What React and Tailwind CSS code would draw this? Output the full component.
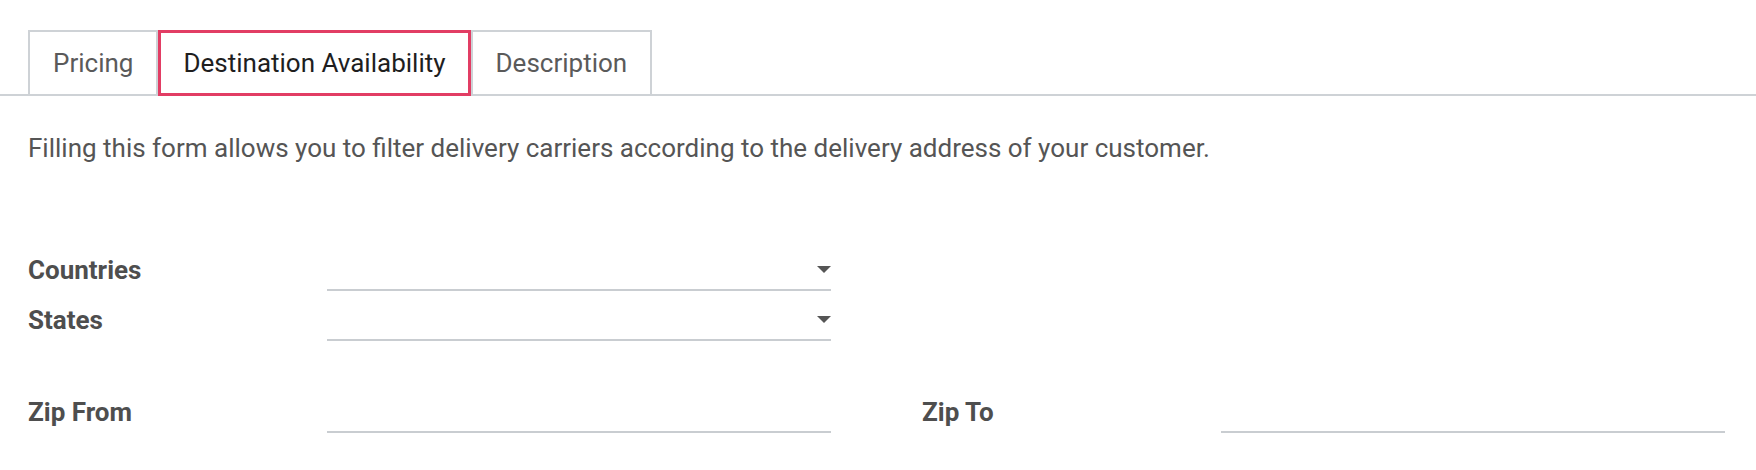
const tabs = [
  { id: 'pricing', label: 'Pricing' },
  { id: 'destination', label: 'Destination Availability' },
  { id: 'description', label: 'Description' },
];

function Caret() {
  return (
    <svg width="14" height="7" viewBox="0 0 14 7" className="shrink-0">
      <path d="M0 0h14L7 7z" fill="#555" />
    </svg>
  );
}

function Field({ label, select }) {
  return (
    <div className="flex h-[42px] items-center">
      <div className="w-[299px] shrink-0 text-[26px] font-bold text-[#4e4e4e]">{label}</div>
      <div className="flex h-[42px] w-[504px] items-center justify-end border-b-2 border-[#c9cdd1]">
        {select && <Caret />}
      </div>
    </div>
  );
}

export default function App() {
  const active = 'destination';

  return (
    <div className="min-h-[470px] bg-white pt-[30px] font-['Roboto',sans-serif] text-[#555]">
      <div className="flex items-end border-b-2 border-[#ced2d6] pl-[28px]">
        {tabs.map((tab) =>
          tab.id === active ? (
            <div
              key={tab.id}
              className="-mb-[2px] flex h-[66px] items-center border-[3px] border-[#e23d64] bg-white px-[22px] text-[26px] text-[#1e1e1e]"
            >
              {tab.label}
            </div>
          ) : (
            <div
              key={tab.id}
              className="flex h-[64px] items-center border-2 border-b-0 border-[#ced2d6] bg-white px-[23px] text-[26px] text-[#5a5a5a]"
            >
              {tab.label}
            </div>
          )
        )}
      </div>

      <p className="mt-[37px] pl-[28px] text-[26px] leading-[30px] text-[#555]">
        Filling this form allows you to filter delivery carriers according to the delivery address of your customer.
      </p>

      <div className="mt-[86px] flex flex-col gap-[8px] pl-[28px]">
        <Field label="Countries" select />
        <Field label="States" select />
      </div>

      <div className="mt-[50px] flex gap-[91px] pl-[28px]">
        <Field label="Zip From" />
        <Field label="Zip To" />
      </div>
    </div>
  );
}
